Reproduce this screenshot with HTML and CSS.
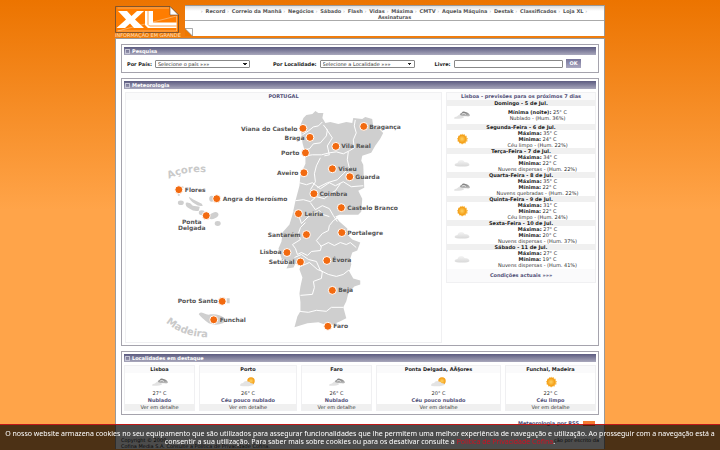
FILE: index.html
```html
<!DOCTYPE html>
<html lang="pt">
<head>
<meta charset="utf-8">
<title>XL - Meteorologia</title>
<link rel="stylesheet" href="styles.css">
</head>
<body>
<svg class="defs" aria-hidden="true">
  <defs>
    <radialGradient id="sunfill"><stop offset="0" stop-color="#ffd060"/><stop offset="1" stop-color="#f39a10"/></radialGradient>
    <linearGradient id="greycloud" x2="0" y2="1"><stop offset="0" stop-color="#777"/><stop offset="1" stop-color="#c4c4c4"/></linearGradient>
    <linearGradient id="palecloud" x2="0" y2="1"><stop offset="0" stop-color="#f5f5f5"/><stop offset="1" stop-color="#d8d8d8"/></linearGradient>
    <symbol id="sun" viewBox="0 0 18 12"><path d="M9 .5l1 1.300 1.600-.7.5 1.600 1.700.1-.2 1.700 1.400.9-.9 1.300.6 1.600-1.700.5-.3 1.700-1.700-.2L9 11.500l-1-1.200-1.700.2-.3-1.700-1.700-.5.6-1.600-.9-1.300 1.400-.9-.2-1.700 1.700-.1.5-1.600 1.600.7z" fill="#f7b84a"/><circle cx="9" cy="6" r="4.200" fill="url(#sunfill)"/></symbol>
    <symbol id="dark" viewBox="0 0 18 12"><path d="M7 7q-1-2 1.500-3Q10 1.800 12.500 3 16 3.500 17 6.500q-1 1.200-3 .8z" fill="url(#greycloud)"/><path d="M1 9q.5-1.500 3-1.500 2-2.500 4.500-.8Q11 7 11 8.500 9 10 1.500 9.800z" fill="#e2e2e2"/><path d="M9 5q2-1.500 4 .5" stroke="#eee" fill="none" stroke-width=".8"/></symbol>
    <symbol id="pale" viewBox="0 0 18 12"><path d="M1.500 8q.5-2 3-2 1-3.500 4.500-3 2 .5 2.500 2Q16 5 16.500 8q-1 1.500-7 1.500-7.500 0-8-1.500z" fill="url(#palecloud)"/></symbol>
    <symbol id="partly" viewBox="0 0 18 12"><circle cx="12" cy="5" r="3.700" fill="url(#sunfill)"/><path d="M1 9q.5-2 3-2 2-3 5-1.500 2 .2 2.500 1.500 3 0 3.500 1.500Q12 11 1.500 10z" fill="#e3e3e3"/></symbol>
  </defs>
</svg>

<div class="page">
  <header class="top">
    <a class="logo" href="#" aria-label="XL">
      <svg viewBox="0 0 64 32">
        <path d="M1 .5H55L63.500 9V26.500H.5V.5z" fill="#ff7d00" stroke="#654b36" stroke-width=".8"/>
        <path d="M2.500 2H54M61.500 10V25H2.500z" fill="none" stroke="#f5d8bb" stroke-width=".5"/>
        <path d="M3 5H12L16.500 10 22 5H29L20 13.500 29 22H19L15 17.500 10 22H1.500L11 13.500z" fill="#fff"/>
        <path d="M30 5H38V16.500H61.500V22H33L30 19z" fill="#fff"/>
        <path d="M33 5V18.500L34.500 20H61.500" fill="none" stroke="#ff7d00" stroke-width=".7"/>
        <path d="M55 .5V9H63.500z" fill="#fff" stroke="#654b36" stroke-width=".6"/>
        <text x="0" y="31">INFORMAÇÃO EM GRANDE</text>
      </svg>
    </a>
    <div class="masthead">
      <nav class="menu">
        <i>›</i> <a href="#">Record</a> <i>›</i> <a href="#">Correio da Manhã</a> <i>›</i> <a href="#">Negócios</a> <i>›</i> <a href="#">Sábado</a> <i>›</i> <a href="#">Flash</a> <i>›</i> <a href="#">Vidas</a> <i>›</i> <a href="#">Máxima</a> <i>›</i> <a href="#">CMTV</a> <i>›</i> <a href="#">Aquela Máquina</a> <i>›</i> <a href="#">Destak</a> <i>›</i> <a href="#">Classificados</a> <i>›</i> <a href="#">Loja XL</a> <i>›</i> <a href="#">Assinaturas</a>
      </nav>
      <svg class="curl" viewBox="0 0 8 8" aria-hidden="true"><path d="M0 0L7.500 8H0z" fill="#ee7800"/><path d="M0 .5H7.500V8L0 .5" fill="#fff" stroke="#888" stroke-width=".7"/></svg>
    </div>
  </header>

  <main class="content">
    <section class="panel">
      <h2>Pesquisa</h2>
      <form class="search">
        <div><label for="pais">Por País:</label><select id="pais"><option>Selecione o país »»»</option></select></div>
        <div><label for="loc">Por Localidade:</label><select id="loc"><option>Selecione a Localidade »»»</option></select></div>
        <div class="free"><label for="livre">Livre:</label><input id="livre" type="text"><button type="button">OK</button></div>
      </form>
    </section>

    <section class="panel">
      <h2>Meteorologia</h2>
      <div class="weather">
        <div class="box mapbox">
          <h3>PORTUGAL</h3>
          <svg class="map" viewBox="125 99 316 243" role="img" aria-label="Mapa de Portugal">
            <g class="land">
              <path d="M300 124L303 117 306 114 312 113 315 110 318 112 323 112 322 117 325 122 330 121 338 123 346 121 352 122 353 117 362 118 365 116 372 118 373 125 379 128 383 132 380 138 375 145 371 152 362 155 361 160 363 164 364 187 358 190 362 198 361 211 358 214 339 214 335 216 339 221 347 228 347 234 352 239 360 242 357 250 352 252 350 258 351 264 349 271 353 278 360 280 360 284 354 286 348 293 346 301 343 307 346 318 340 321 333 324 329 326 318 322 307 323 294 327 297 316 300 311 300 302 299 293 300 286 302 277 299 269 300 265 295 263 293 267 286 268 289 261 281 258 278 248 281 241 282 232 289 224 292 214 295 200 299 185 300 174 305 163 305 153 302 142z"/>
              <path d="M180 187q2-3 3 0zM177 193q2-1 2 2h-2z"/>
              <ellipse cx="180" cy="202" rx="3" ry="2.300"/><path d="M185 202q4-1 7 3l7 1-1 4q-5 1-9-2-5-2-4-6zM188 196l5 3 8 4 1 2q-4 1-8-2-5-3-6-7z"/>
              <ellipse cx="211" cy="198" rx="2.500" ry="3"/><ellipse cx="201" cy="212" rx="3" ry="2.500"/><ellipse cx="213" cy="215" rx="5" ry="3" transform="rotate(-25 213 215)"/><ellipse cx="217" cy="223" rx="3" ry="2.500"/>
              <path d="M198 314q1-3 5-1 4 2 7 1 8-1 14 4 2 3-2 5-7 3-14 0-7-5-10-9zM226 298h3v5h-3z"/>
            </g>
            <g class="borders">
              <path d="M302 134l6-4 5-4 5-1 4-4M303 149l6-1 4-5 7-1 6-7 1-6-4-5M326 128l6 9-5 8 2 9-5 1M305 155l7-1 9 0 8-2 7-1 7 2 6-3 5-3-1-8 3-7-2-7 1-6"/>
              <path d="M348 151l-1 8 2 8-6 6-6 6-10 3-10 5M320 157l-4 8-2 8 1 8-5 8M299 182l7 2 6-2 8 6 9-6 6 3 8-4 8 5 12-1M295 200l8-1 7 2 6-5 8 2 6-5 5-3 5-7M310 202l5 7 7-4 7 3 4 7 4 6M293 211l6 6 2 6 7-7 5-3 6-3 4 4 6 2"/>
              <path d="M339 216l-6 4-4 5-1 5-6 3-6 7 5 6-1 4-9 1-4 4-6-3-4 2-2-6-3-4 8-5-2-6 2-6 5-5M320 246l8-4 6 3 6-3 6 2 4-2 6 5M294 257l7-3 7 5 8 2 4 9 8 4 8 2 7-2 5-4 5 1M300 266l9-4 8 7 5 2-1 7-8 3 1 6-2 7-12 1M299 311l9 1 8-2 10 1 5-4 12 0"/>
            </g>
            <g class="pins">
              <circle cx="302.500" cy="127.500" r="4"/><circle cx="309.500" cy="136.500" r="4"/><circle cx="363.500" cy="125.500" r="4"/><circle cx="335.500" cy="145.500" r="4"/><circle cx="305" cy="152" r="4"/><circle cx="332" cy="168" r="4"/><circle cx="349.500" cy="176" r="4"/><circle cx="303.500" cy="172" r="4"/><circle cx="313.500" cy="193" r="4"/><circle cx="341" cy="207" r="4"/><circle cx="298" cy="213" r="4"/><circle cx="306" cy="234" r="4"/><circle cx="341.500" cy="232" r="4"/><circle cx="286.500" cy="252" r="4"/><circle cx="300" cy="261.500" r="4"/><circle cx="326.500" cy="260" r="4"/><circle cx="332" cy="290" r="4"/><circle cx="327.500" cy="326" r="4"/><circle cx="178" cy="189" r="4"/><circle cx="216" cy="198" r="4"/><circle cx="205.500" cy="215" r="4"/><circle cx="221.500" cy="301" r="4"/><circle cx="213" cy="319.500" r="4"/>
            </g>
            <g class="names">
              <text x="369" y="128">Bragança</text><text x="341" y="147">Vila Real</text><text x="338" y="170">Viseu</text><text x="355" y="178">Guarda</text><text x="319" y="195">Coimbra</text><text x="347" y="209">Castelo Branco</text><text x="304" y="215">Leiria</text><text x="347" y="234">Portalegre</text><text x="332" y="262">Évora</text><text x="338" y="292">Beja</text><text x="333" y="328">Faro</text><text x="184" y="191">Flores</text><text x="222" y="200">Angra do Heroísmo</text><text x="219" y="322">Funchal</text>
              <g class="end"><text x="297" y="130">Viana do Castelo</text><text x="304" y="139">Braga</text><text x="299" y="154">Porto</text><text x="298" y="174">Aveiro</text><text x="300" y="236">Santarém</text><text x="281" y="254">Lisboa</text><text x="294" y="264">Setúbal</text><text x="217" y="303">Porto Santo</text></g>
              <g class="mid"><text x="191" y="223">Ponta</text><text x="191" y="229">Delgada</text></g>
            </g>
            <path id="arc1" d="M168 178q18-9 42-6" fill="none"/><path id="arc2" d="M165 322q17 15 43 15" fill="none"/>
            <g class="isles"><text><textPath href="#arc1">Açores</textPath></text><text><textPath href="#arc2">Madeira</textPath></text></g>
          </svg>
        </div>
        <div class="box forecast">
          <h3>Lisboa - previsões para os próximos 7 dias</h3>
          <article><h4>Domingo - 5 de Jul.</h4><svg><use href="#dark"/></svg><p><b>Mínima (noite):</b> 25° C<br>Nublado - (Hum. 36%)</p></article>
          <article><h4>Segunda-Feira - 6 de Jul.</h4><svg><use href="#sun"/></svg><p><b>Máxima:</b> 35° C<br><b>Mínima:</b> 24° C<br>Céu limpo - (Hum. 22%)</p></article>
          <article><h4>Terça-Feira - 7 de Jul.</h4><svg><use href="#pale"/></svg><p><b>Máxima:</b> 34° C<br><b>Mínima:</b> 22° C<br>Nuvens dispersas - (Hum. 22%)</p></article>
          <article><h4>Quarta-Feira - 8 de Jul.</h4><svg><use href="#dark"/></svg><p><b>Máxima:</b> 35° C<br><b>Mínima:</b> 22° C<br>Nuvens quebradas - (Hum. 22%)</p></article>
          <article><h4>Quinta-Feira - 9 de Jul.</h4><svg><use href="#sun"/></svg><p><b>Máxima:</b> 31° C<br><b>Mínima:</b> 22° C<br>Céu limpo - (Hum. 24%)</p></article>
          <article><h4>Sexta-Feira - 10 de Jul.</h4><svg><use href="#pale"/></svg><p><b>Máxima:</b> 27° C<br><b>Mínima:</b> 20° C<br>Nuvens dispersas - (Hum. 37%)</p></article>
          <article><h4>Sábado - 11 de Jul.</h4><svg><use href="#pale"/></svg><p><b>Máxima:</b> 27° C<br><b>Mínima:</b> 19° C<br>Nuvens dispersas - (Hum. 41%)</p></article>
          <a class="current" href="#">Condições actuais »»»</a>
        </div>
      </div>
    </section>

    <section class="panel">
      <h2>Localidades em destaque</h2>
      <div class="places">
        <article class="box"><h3>Lisboa</h3><svg><use href="#dark"/></svg><p>27° C<br><b>Nublado</b></p><a href="#">Ver em detalhe</a></article>
        <article class="box"><h3>Porto</h3><svg><use href="#partly"/></svg><p>26° C<br><b>Céu pouco nublado</b></p><a href="#">Ver em detalhe</a></article>
        <article class="box"><h3>Faro</h3><svg><use href="#dark"/></svg><p>26° C<br><b>Nublado</b></p><a href="#">Ver em detalhe</a></article>
        <article class="box"><h3>Ponta Delgada, AÃ§ores</h3><svg><use href="#partly"/></svg><p>20° C<br><b>Céu pouco nublado</b></p><a href="#">Ver em detalhe</a></article>
        <article class="box"><h3>Funchal, Madeira</h3><svg><use href="#sun"/></svg><p>22° C<br><b>Céu limpo</b></p><a href="#">Ver em detalhe</a></article>
      </div>
    </section>

    <div class="feed"><a href="#">Meteorologia por RSS</a><span class="rss"></span></div>
    <footer class="legal"><p><span>Copyright © 2009.</span><span>ção por escrito da</span></p><p>Cofina Media S.A. Consulte a Política de Privacidade Cofina.</p></footer>
  </main>
</div>

<div class="cookies">O nosso website armazena cookies no seu equipamento que são utilizados para assegurar funcionalidades que lhe permitem uma melhor experiência de navegação e utilização. Ao prosseguir com a navegação está a consentir a sua utilização. Para saber mais sobre cookies ou para os desativar consulte a <a href="#">Politica de Privacidade Cofina</a>.</div>
</body>
</html>
```
FILE: styles.css
```css
* { box-sizing: border-box; }
html { min-height: 100%; background: linear-gradient(#ec7400, #ffa449 210px) #ffa449; }
body { margin: 0; font: 5px/6px "DejaVu Sans", sans-serif; color: #333; }
h2, h3, h4, p { margin: 0; font-size: 5px; }
a { color: inherit; text-decoration: none; }
.defs { position: absolute; width: 0; height: 0; }
.page { max-width: 490px; margin: 0 auto; padding-top: 5px; }

.top { display: flex; gap: 6px; height: 33px; }
.logo { flex: 0 0 64px; padding-top: 1px; }
.logo svg { display: block; width: 64px; height: 32px; overflow: visible; }
.logo text { font: 5px "DejaVu Sans", sans-serif; fill: #ffe0c0; }
.masthead { flex: 1; height: 31px; background: #fff; border: solid #999; border-width: 1px 1px 0 0; }
.menu { height: 15px; padding: 2px 14px 0; border-bottom: 1px solid #aaa; background: linear-gradient(#ddd, #fff 5px); text-align: center; font-weight: bold; color: #555; }
.menu i { margin-right: 1px; font-style: normal; font-weight: normal; color: #aaa; }
.curl { display: block; width: 8px; height: 8px; margin-top: 7px; }

.content { padding: 5px 5px 0; background: #fff; border: 1px solid #999; border-bottom: 0; }
.panel { margin-bottom: 5px; padding: 2px; border: 1px solid #a5a3ad; }
.panel h2 { display: flex; align-items: center; gap: 2px; height: 8px; padding-left: 1px; color: #fff; background: linear-gradient(#5c5b80, #a9a8bc); }
.panel h2::before { content: ""; box-sizing: border-box; width: 5px; height: 5px; border: 1px solid #c5c5d6; }

.search { display: flex; align-items: center; height: 15px; padding: 2px 3px 0; font-weight: bold; color: #222; }
.search div { display: flex; align-items: center; gap: 3px; margin-right: 23px; }
.search .free { flex: 1; margin: 0 12px 0 -3px; }
.search select, .search input { font: 5px/6px "DejaVu Sans", sans-serif; height: 8px; padding: 0; border: 1px solid #888; border-radius: 1px; background: #fff; color: #333; }
.search select { width: 95px; padding-left: 2px; appearance: none; background: linear-gradient(45deg, transparent 50%, #222 50%) right 4px center / 2px 2px no-repeat, linear-gradient(-45deg, transparent 50%, #222 50%) right 2px center / 2px 2px no-repeat, #fff; }
.search input { flex: 1; min-width: 0; }
.search button { width: 15px; height: 9px; padding: 0; border: 0; background: linear-gradient(#77759b, #aaa8c0); color: #fff; font: bold 5px/9px "DejaVu Sans", sans-serif; }

.box { border: 1px solid #f0f0f2; }
.box h3 { height: 7px; line-height: 7px; text-align: center; background: #fafafb; color: #525078; }
.weather { display: flex; align-items: flex-start; gap: 4px; padding: 3px 0 0 1px; }
.mapbox { flex: 1; }
.map { display: block; width: 100%; }
.land { fill: #cfcfcf; }
.borders { fill: none; stroke: #fff; stroke-width: 1; }
.pins { fill: #f26a10; stroke: #fff; stroke-width: 1; }
.names { font-weight: bold; font-size: 6px; fill: #555; }
.names .end { text-anchor: end; }
.names .mid { text-anchor: middle; }
.isles { font-weight: bold; font-size: 10px; fill: #c9c9c9; }

.forecast { flex: 0 0 150px; }
.forecast article { display: grid; grid-template: 6px 18px / 33px 1fr; align-items: center; text-align: center; }
.forecast h4 { grid-column: 1 / -1; background: #f0f0f0; color: #222; }
.forecast svg { width: 18px; height: 12px; margin-left: 6px; }
.current { display: block; margin-top: 1px; height: 13px; line-height: 12px; text-align: center; font-weight: bold; color: #525078; background: #fafafb; }
.forecast p b { color: #222; }

.places { display: grid; grid-template-columns: 71fr 98fr 71fr 125fr 91fr; gap: 4px; padding: 3px 0 1px; }
.places article { text-align: center; }
.places h3 { color: #222; }
.places svg { display: block; width: 18px; height: 12px; margin: 3px auto 2px; }
.places p { line-height: 7px; }
.places b { color: #525078; }
.places a { display: block; background: #f0f0f0; }

.feed { display: flex; justify-content: flex-end; align-items: center; gap: 4px; margin: 2px 4px 11px; font-weight: bold; color: #525078; }
.rss { width: 12px; height: 5px; background: #f47a30; }
.legal { height: 12px; color: #222; }
.legal p { display: flex; justify-content: space-between; }
.cookies { position: fixed; inset: auto 0 0; height: 26px; padding: 5px 3px 0; border-top: 1px solid #c01818; background: rgba(0, 0, 0, .7); color: #fff; font: 7px/8px "Noto Sans", sans-serif; text-align: center; }
.cookies a { color: #d01020; }
```
